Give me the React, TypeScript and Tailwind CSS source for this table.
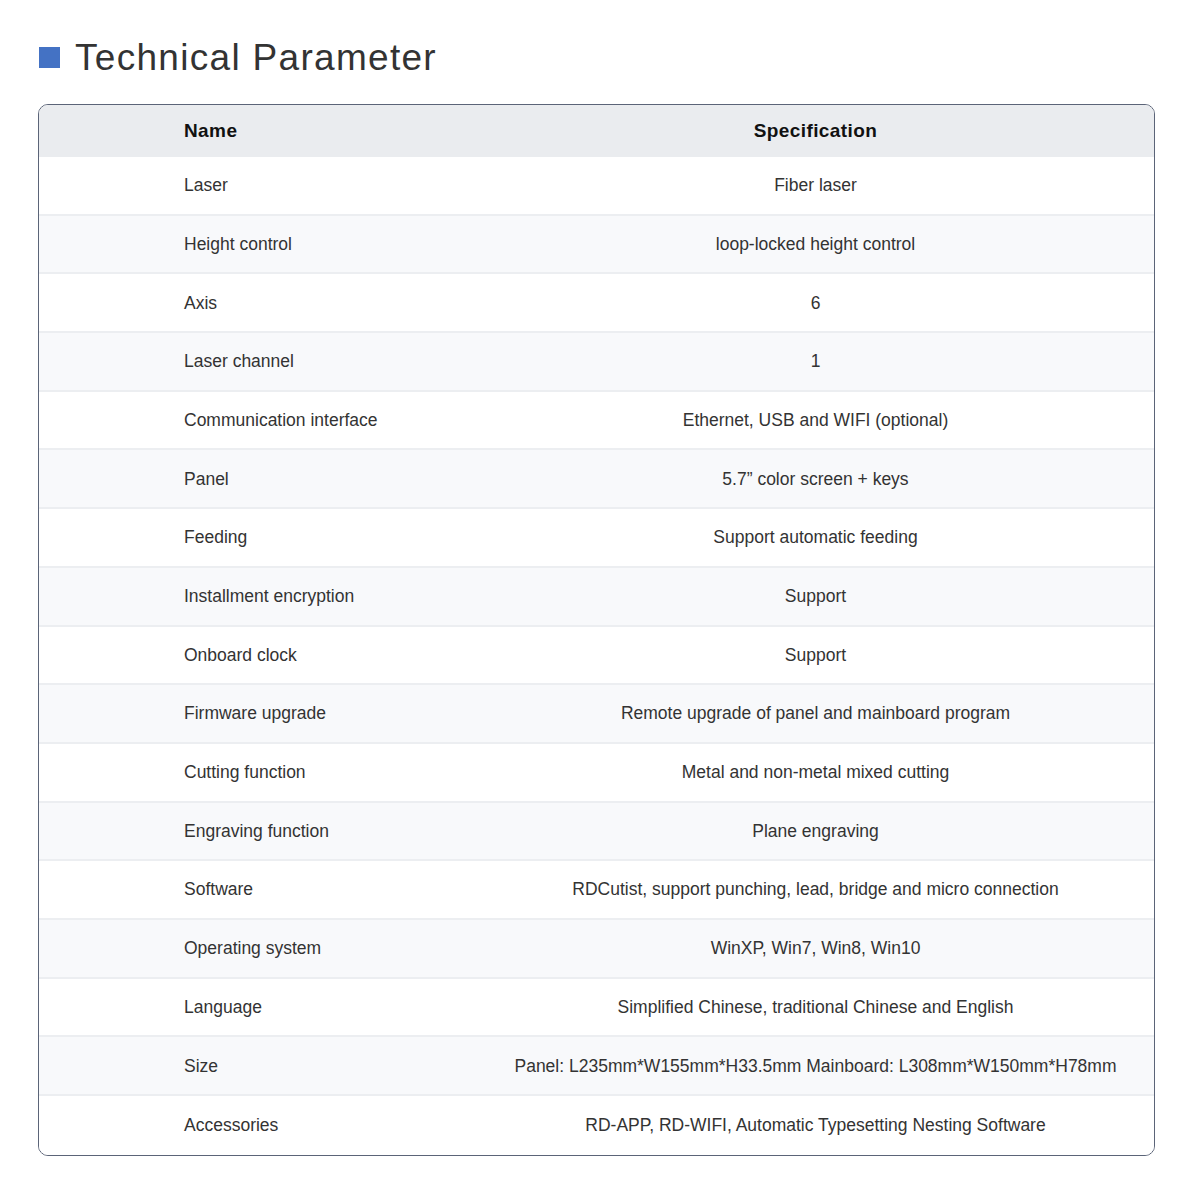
const ROWS: [string, string][] = [
  ["Laser", "Fiber laser"],
  ["Height control", "loop-locked height control"],
  ["Axis", "6"],
  ["Laser channel", "1"],
  ["Communication interface", "Ethernet, USB and WIFI (optional)"],
  ["Panel", "5.7” color screen + keys"],
  ["Feeding", "Support automatic feeding"],
  ["Installment encryption", "Support"],
  ["Onboard clock", "Support"],
  ["Firmware upgrade", "Remote upgrade of panel and mainboard program"],
  ["Cutting function", "Metal and non-metal mixed cutting"],
  ["Engraving function", "Plane engraving"],
  ["Software", "RDCutist, support punching, lead, bridge and micro connection"],
  ["Operating system", "WinXP, Win7, Win8, Win10"],
  ["Language", "Simplified Chinese, traditional Chinese and English"],
  ["Size", "Panel: L235mm*W155mm*H33.5mm Mainboard: L308mm*W150mm*H78mm"],
  ["Accessories", "RD-APP, RD-WIFI, Automatic Typesetting Nesting Software"],
];

export default function App() {
  return (
    <div className="min-h-[1200px] w-[1200px] bg-white font-['Liberation_Sans',Arial,sans-serif] pt-[36px]">
      {/* title */}
      <div className="flex items-center ml-[39px] h-[42px]">
        <div className="w-[21px] h-[21px] bg-[#4472c4]" />
        <h2 className="ml-[15px] text-[37px] leading-none text-[#333] tracking-[1.3px]">Technical Parameter</h2>
      </div>

      {/* table */}
      <div className="mt-[26px] ml-[38px] w-[1117px] border border-[#5b6478] rounded-[10px] overflow-hidden">
        <div className="grid grid-cols-[438px_1fr] h-[52px] items-center bg-[#eaecef] text-[19px] font-bold text-[#111] tracking-[0.4px]">
          <div className="pl-[145px]">Name</div>
          <div className="text-center">Specification</div>
        </div>
        {ROWS.map(([name, spec], i) => (
          <div
            key={name}
            className={
              "grid grid-cols-[438px_1fr] h-[58.7px] items-center text-[17.5px] text-[#333] border-[#eceef1] " +
              (i % 2 === 0 ? "bg-white " : "bg-[#f8f9fb] ") +
              (i < ROWS.length - 1 ? "border-b-2" : "")
            }
          >
            <div className="pl-[145px]">{name}</div>
            <div className="text-center">{spec}</div>
          </div>
        ))}
      </div>
    </div>
  );
}
